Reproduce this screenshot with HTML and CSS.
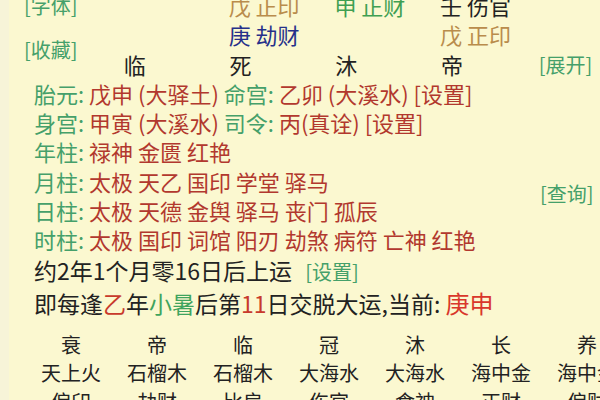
FILE: index.html
```html
<!DOCTYPE html>
<html lang="zh-CN">
<head>
<meta charset="utf-8">
<title>排盘</title>
<link rel="stylesheet" href="styles.css">
</head>
<body>
<div class="page">
  <div class="top">
    <div class="cell link">[字体]</div>
    <div class="cell"></div>
    <div class="cell stem gold">戊 正印</div>
    <div class="cell stem green">申 正财</div>
    <div class="cell stem dark">壬 伤官</div>
    <div class="cell"></div>
    <div class="cell link fav">[收藏]</div>
    <div class="cell"></div>
    <div class="cell stem blue">庚 劫财</div>
    <div class="cell"></div>
    <div class="cell stem gold">戊 正印</div>
    <div class="cell"></div>
    <div class="cell phase">临</div>
    <div class="cell phase">死</div>
    <div class="cell phase">沐</div>
    <div class="cell phase">帝</div>
    <div class="cell link open">[展开]</div>
  </div>

  <div class="info">
    <div class="line"><span class="lbl">胎元:</span> <span class="val">戊申 (大驿土)</span> <span class="lbl">命宫:</span> <span class="val">乙卯 (大溪水) [设置]</span></div>
    <div class="line"><span class="lbl">身宫:</span> <span class="val">甲寅 (大溪水)</span> <span class="lbl">司令:</span> <span class="val">丙(真诠) [设置]</span></div>
  </div>

  <div class="shensha">
    <div class="list">
      <div class="line"><span class="lbl">年柱:</span> <span class="val">禄神 金匮 红艳</span></div>
      <div class="line"><span class="lbl">月柱:</span> <span class="val">太极 天乙 国印 学堂 驿马</span></div>
      <div class="line"><span class="lbl">日柱:</span> <span class="val">太极 天德 金舆 驿马 丧门 孤辰</span></div>
      <div class="line"><span class="lbl">时柱:</span> <span class="val">太极 国印 词馆 阳刃 劫煞 病符 亡神 红艳</span></div>
    </div>
    <div class="link query">[查询]</div>
  </div>

  <div class="yun">
    <div class="line">约2年1个月零16日后上运 <span class="link set">[设置]</span></div>
    <div class="line">即每逢<span class="hl-red">乙</span>年<span class="hl-green">小暑</span>后第<span class="hl-red">11</span>日交脱大运,当前: <span class="cur">庚申</span></div>
  </div>

  <div class="dayun">
    <div>衰</div><div>帝</div><div>临</div><div>冠</div><div>沐</div><div>长</div><div>养</div>
    <div>天上火</div><div>石榴木</div><div>石榴木</div><div>大海水</div><div>大海水</div><div>海中金</div><div>海中金</div>
    <div>偏印</div><div>劫财</div><div>比肩</div><div>伤官</div><div>食神</div><div>正财</div><div>偏财</div>
  </div>
</div>
</body>
</html>
```

FILE: styles.css
```css
html, body {
  margin: 0;
  padding: 0;
  width: 600px;
  height: 400px;
  overflow: hidden;
}

body {
  background: linear-gradient(to right, #f7f4d8 0 9px, #fbf8d0 9px);
  font-family: "Noto Sans CJK SC", "Noto Sans", sans-serif;
  font-size: 22px;
  color: #222;
}

.page {
  margin-top: -9px;
}

.top {
  display: grid;
  grid-template-columns: 58px repeat(4, 105.7px) 1fr;
  grid-auto-rows: 29.3px;
  line-height: 29.3px;
  padding-left: 24px;
}

.cell {
  white-space: nowrap;
}

.link {
  color: #45a06a;
  font-size: 20px;
}

.fav {
  grid-column: 1;
  grid-row: 2 / 4;
  align-self: center;
}

.stem {
  padding-left: 41px;
}

.gold { color: #b98c4c; }
.green { color: #3f9f52; }
.dark { color: #222; }
.blue { color: #26308a; }

.phase {
  text-align: center;
}

.open {
  padding-left: 34px;
}

.info,
.shensha {
  padding-left: 34px;
  line-height: 29.3px;
}

.line {
  white-space: nowrap;
}

.lbl { color: #45a06a; }
.val { color: #b2382e; }

.shensha {
  display: flex;
  align-items: center;
}

.list {
  width: 506px;
}

.query {
  margin-bottom: 4px;
}

.yun {
  padding-left: 34px;
  line-height: 31px;
  font-size: 23px;
}

.set {
  margin-left: 8px;
}

.hl-red { color: #c83a2c; }
.hl-green { color: #3fa45e; }

.cur {
  color: #d9372b;
  font-size: 24px;
}

.dayun {
  display: grid;
  grid-template-columns: repeat(7, 86px);
  grid-auto-rows: 28.5px;
  line-height: 28.5px;
  margin-top: 12px;
  padding-left: 28px;
  font-size: 20px;
  text-align: center;
  white-space: nowrap;
}
```
